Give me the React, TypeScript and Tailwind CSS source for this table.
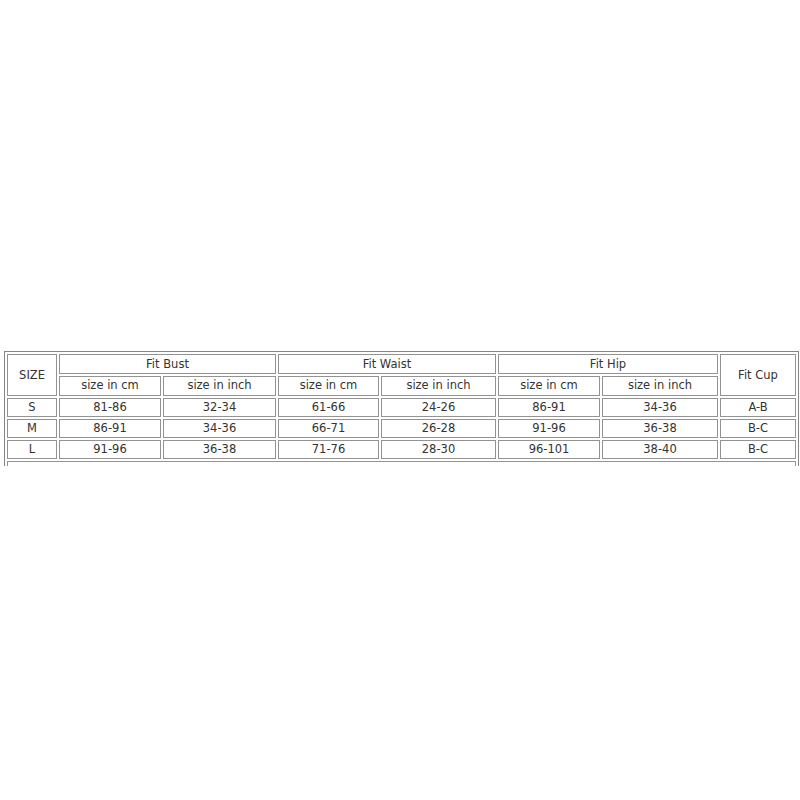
import React from "react";

const rows = [
  ["S", "81-86", "32-34", "61-66", "24-26", "86-91", "34-36", "A-B"],
  ["M", "86-91", "34-36", "66-71", "26-28", "91-96", "36-38", "B-C"],
  ["L", "91-96", "36-38", "71-76", "28-30", "96-101", "38-40", "B-C"],
];

const cell = "border border-[#939393] flex items-center justify-center leading-none";

export default function App() {
  return (
    <div
      className="min-h-[800px] w-[800px] bg-white pt-[351px] pl-[4px] text-[#333333]"
      style={{ fontFamily: '"DejaVu Sans", Verdana, sans-serif' }}
    >
      <div className="h-[115px] w-[795px] overflow-hidden">
        <div className="grid w-[795px] grid-cols-[50px_102px_113px_101px_115px_102px_116px_76px] grid-rows-[20px_20px_19px_19px_19px_20px] gap-[2px] border border-[#858585] p-[2px] text-[11.5px]">
          <div className={`${cell} row-span-2 pt-[2px]`}>SIZE</div>
          <div className={`${cell} col-span-2 pt-[2px]`}>Fit Bust</div>
          <div className={`${cell} col-span-2 pt-[2px]`}>Fit Waist</div>
          <div className={`${cell} col-span-2 pt-[2px]`}>Fit Hip</div>
          <div className={`${cell} row-span-2 pt-[2px]`}>Fit Cup</div>
          <div className={cell}>size in cm</div>
          <div className={cell}>size in inch</div>
          <div className={cell}>size in cm</div>
          <div className={cell}>size in inch</div>
          <div className={cell}>size in cm</div>
          <div className={cell}>size in inch</div>
          {rows.map((r) =>
            r.map((v, i) => (
              <div key={r[0] + i} className={cell}>
                {v}
              </div>
            ))
          )}
          <div className={`${cell} col-span-8`}></div>
        </div>
      </div>
    </div>
  );
}
